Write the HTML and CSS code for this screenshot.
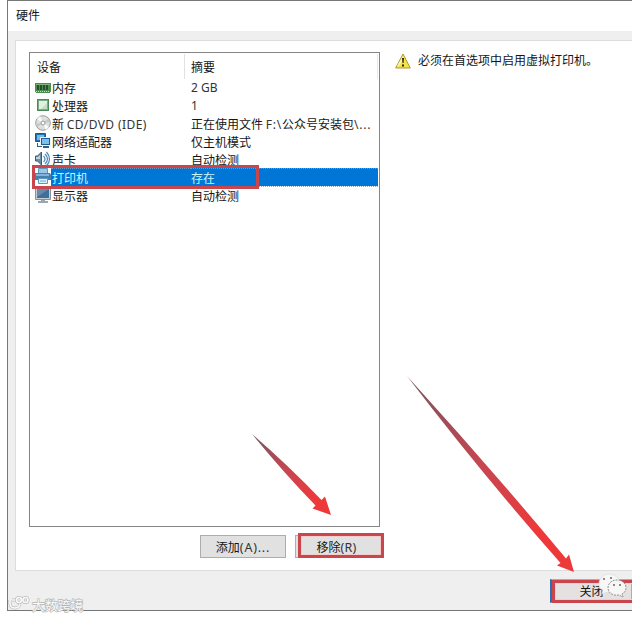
FILE: index.html
```html
<!DOCTYPE html>
<html lang="zh-CN">
<head>
<meta charset="utf-8">
<title>硬件</title>
<link rel="stylesheet" href="styles.css">
</head>
<body>
<div class="window">
  <header class="titlebar">硬件</header>
  <main class="panel">
    <section class="left">
      <div class="list">
        <div class="head"><span>设备</span><span class="summary">摘要</span></div>
        <div class="row">
          <svg class="icon" viewBox="0 0 16 16"><path fill="#4d8d51" d="M0 4h16v9h-1v1H1v-1H0z"/><path fill="#7dba78" d="M1 5h14v1H1z"/><path fill="#254f30" d="M2 6h2v5H2zM5 6h2v5H5zM8 6h2v5H8zM11 6h2v5h-2z"/><path stroke="#c5dfb9" stroke-dasharray="1 1" d="M1 12.500h14"/></svg>
          <span class="name">内存</span><span class="value latin">2 GB</span></div>
        <div class="row">
          <svg class="icon" viewBox="0 0 16 16"><path fill="#4b8759" d="M2 2h12v12H2z"/><path fill="#79ad82" d="M3 3h10v10H3z"/><path fill="#e2f0e2" d="M4 4h8v8H4z"/><path fill="#c2dec5" d="M6 12l6-6v6z"/></svg>
          <span class="name">处理器</span><span class="value latin">1</span></div>
        <div class="row">
          <svg class="icon" viewBox="0 0 16 16"><circle cx="8" cy="8" r="7.300" fill="#dedfdf" stroke="#9b9b9b"/><path fill="#fafafa" d="M8 8L2 4 5 1zM8 8l6 4-3 3z"/><path fill="#c4c6c7" d="M8 8L1 9l1 3zM8 8l7-1-2-3z"/><circle cx="8" cy="8" r="2" fill="#fff" stroke="#999"/></svg>
          <span class="name">新 <span class="latin wide">CD/DVD (IDE)</span></span><span class="value">正在使用文件 <span class="latin path">F:\</span>公众号安装包<span class="latin path">\...</span></span></div>
        <div class="row">
          <svg class="icon" viewBox="0 0 16 16"><path fill="#236eab" stroke="#295576" d="M.500.500h10v8H.500z"/><path fill="#78b8e4" d="M2 2h7v5H2z"/><path fill="#1f5f96" stroke="#edf6fc" d="M5.500 4.500h10v8h-10z"/><path fill="#80bfe9" d="M7 6h7v5H7z"/><path fill="#345f7b" d="M2 10h1v3h4v1H2zM8 13h6v2H8z"/></svg>
          <span class="name">网络适配器</span><span class="value">仅主机模式</span></div>
        <div class="row">
          <svg class="icon" viewBox="0 0 16 16"><path fill="#6a91aa" stroke="#3d596c" d="M.500 5h2l4-4v13l-4-4h-2z"/><path fill="#bdd1dc" d="M1 6h2l2-2v4H1z"/><path fill="none" stroke="#4f8bb9" stroke-width="1.200" d="M8.500 5q3 3 0 6M10 3q5 5 0 10M11.500 1q6 7 0 14"/></svg>
          <span class="name">声卡</span><span class="value">自动检测</span></div>
        <div class="row selected">
          <svg class="icon" viewBox="0 0 16 16"><path fill="#9cc7e7" stroke="#5b97c0" d="M3.500.500h9v6h-9z"/><path fill="#467ead" d="M0 5h15l1 2v5H0z"/><path fill="#82b3db" d="M1 6h13v2H1z"/><path fill="#d8effb" stroke="#5d96be" d="M3.500 10.500h9v5h-9z"/><path stroke="#75a8c9" d="M5 13h6"/></svg>
          <span class="name">打印机</span><span class="value">存在</span></div>
        <div class="row">
          <svg class="icon" viewBox="0 0 16 16"><path fill="#c7ced2" stroke="#87929a" d="M.500.500h15v12H.500z"/><path fill="#426f97" d="M2 2h12v9H2z"/><path fill="#688bab" d="M2 2h12L2 10z"/><path fill="#9ba8b1" d="M6 13h4v1h3v2H3v-2h3z"/></svg>
          <span class="name">显示器</span><span class="value">自动检测</span></div>
      </div>
      <div class="actions"><div class="button">添加<span class="latin blabel add">(A)...</span></div><div class="button remove">移除<span class="latin blabel">(R)</span></div></div>
    </section>
    <section class="notice">
      <svg class="icon warning" viewBox="0 0 16 16"><path fill="#f3e345" stroke="#aa9840" stroke-linejoin="round" d="M8 1l7.300 14H.700z"/><path fill="#fff8a0" d="M8 3l1 2-5 8H2z"/><path fill="#222" d="M7 5h2l-.5 5h-1zM7 11.500h2v2H7z"/></svg>
      <span>必须在首选项中启用虚拟打印机。</span>
    </section>
  </main>
  <footer class="footer"><div class="button close">关闭</div></footer>
</div>
<svg class="annotations" viewBox="0 0 632 618">
  <defs>
    <linearGradient id="fade" x1="0" y1="0" x2="1" y2="1"><stop stop-color="#785461"/><stop offset=".45" stop-color="#c74650"/><stop offset=".8" stop-color="#ee393a"/></linearGradient>
  </defs>
  <path fill="none" stroke="#f5cccc" d="M301.500 536.500h79v18h-79zM632 583.500h-76.500v16H632"/>
  <g fill="none" stroke="#c9474c" stroke-width="3"><path d="M33.500 166.500h224v21h-224zM299.500 534.500h83v22h-83z"/><path d="M634 581.500h-80.500v20H634"/></g>
  <path fill="url(#fade)" d="M252 434Q286 463 321.500 500L325 496.500 331 515 312.500 508.500 315.500 505.500Q284 473 252 434z"/>
  <path fill="url(#fade)" d="M407 376Q489 466 566 558.500L569 554.500 574 572 557 565.500 560.500 563Q481 473 407 376z"/>
  <g fill="#f7f7f7" stroke="#777" stroke-width=".8"><path d="M600 588c-3-6 1-13 8-14 7 0 12 4 12 9 0 6-5 10-12 9l-6 2 1-4z" stroke="#ddd"/><path d="M608 588c0-5 4-8 9-8s9 3 9 8c0 3-2 5-4 6l1 3-4-2c-6 1-11-2-11-7z" stroke-dasharray="2 1"/></g>
  <g fill="#555"><circle cx="604" cy="579" r=".9"/><circle cx="611" cy="578" r=".9"/><circle cx="614" cy="585" r=".9"/><circle cx="620" cy="585" r=".9"/></g>
  <g fill="none" stroke="#bbb" stroke-width="3"><path d="M10 600v3q0 5 5 5 4 0 5-4M12 600h3"/><circle cx="19" cy="600" r="2.500"/><circle cx="25.500" cy="600" r="2.500"/></g>
  <g fill="none" stroke="#fafafa" stroke-width="1.600"><path d="M10 600v3q0 5 5 5 4 0 5-4M12 600h3"/><circle cx="19" cy="600" r="2.500"/><circle cx="25.500" cy="600" r="2.500"/></g>
  <text class="watermark" x="32" y="609.500">大数跨境</text>
</svg>
</body>
</html>
```
FILE: styles.css
```css
* { box-sizing: border-box; }
body {
  margin: 0;
  width: 632px;
  height: 618px;
  overflow: hidden;
  position: relative;
  background: #fff;
  color: #151515;
  font: 12px/18px "Noto Sans CJK SC", sans-serif;
}
.window {
  margin-left: 7px;
  height: 611px;
  border: solid #777;
  border-width: 1px 0 1px 1px;
  background: #efefef;
  display: flex;
  flex-direction: column;
}
.titlebar { height: 30px; flex: none; background: #fff; padding: 5px 0 0 8px; }
.panel {
  margin: 9px 0 0 7px;
  height: 531px;
  flex: none;
  display: flex;
  background: #fff;
  border: solid #dcdcdc;
  border-width: 1px 0 1px 1px;
}
.left { width: 364px; padding: 11px 0 0 13px; }
.list { width: 351px; height: 475px; border: 1px solid #858585; padding: 1px; }
.head, .row { display: grid; grid-template-columns: 153px 194px; }
.head { height: 25px; line-height: 25px; border-right: 1px solid #e8e8e8; }
.head span { padding-left: 6px; }
.head .summary { border-left: 1px solid #e2e2e2; }
.row { grid-template-columns: 16px 140px 1fr; height: 18px; padding-left: 4px; white-space: nowrap; }
.icon { width: 16px; height: 16px; display: block; }
.name { padding-left: 1px; }
.value { padding-left: 0; }
.latin { font-family: "Noto Sans", sans-serif; color: #333; }
.wide { letter-spacing: .4px; }
.path { letter-spacing: .8px; }
.blabel { font-size: 12.5px; letter-spacing: .3px; }
.add { letter-spacing: .8px; }
.selected { position: relative; top: -1px; color: #c9f5ff; background: linear-gradient(90deg, #fff 20px, #0077d7 20px); }
.selected .value, .selected .name { border-top: 1px dotted #659ac7; border-bottom: 1px dotted #d39b67; line-height: 17px; }
.actions { display: flex; gap: 9px; padding: 8px 0 0 171px; }
.button {
  width: 86px;
  height: 23px;
  flex: none;
  border: 1px solid #adadad;
  background: #e1e1e1;
  text-align: center;
  line-height: 22px;
}
.remove { padding-right: 3px; }
.notice { display: flex; align-items: flex-start; padding: 10px 0 0 15px; gap: 7px; white-space: nowrap; }
.warning { margin-top: 2px; }
.footer { display: flex; justify-content: flex-end; padding-top: 8px; }
.close { width: 82px; height: 24px; border-left: 2px solid #356bb0; line-height: 22px; background: #e5e1e1; }
.annotations { position: absolute; left: 0; top: 0; width: 632px; height: 618px; pointer-events: none; }
.watermark { font-size: 12.8px; font-weight: 400; fill: #fafafa; stroke: #b5b5b5; stroke-width: 1.300px; paint-order: stroke; }
```
